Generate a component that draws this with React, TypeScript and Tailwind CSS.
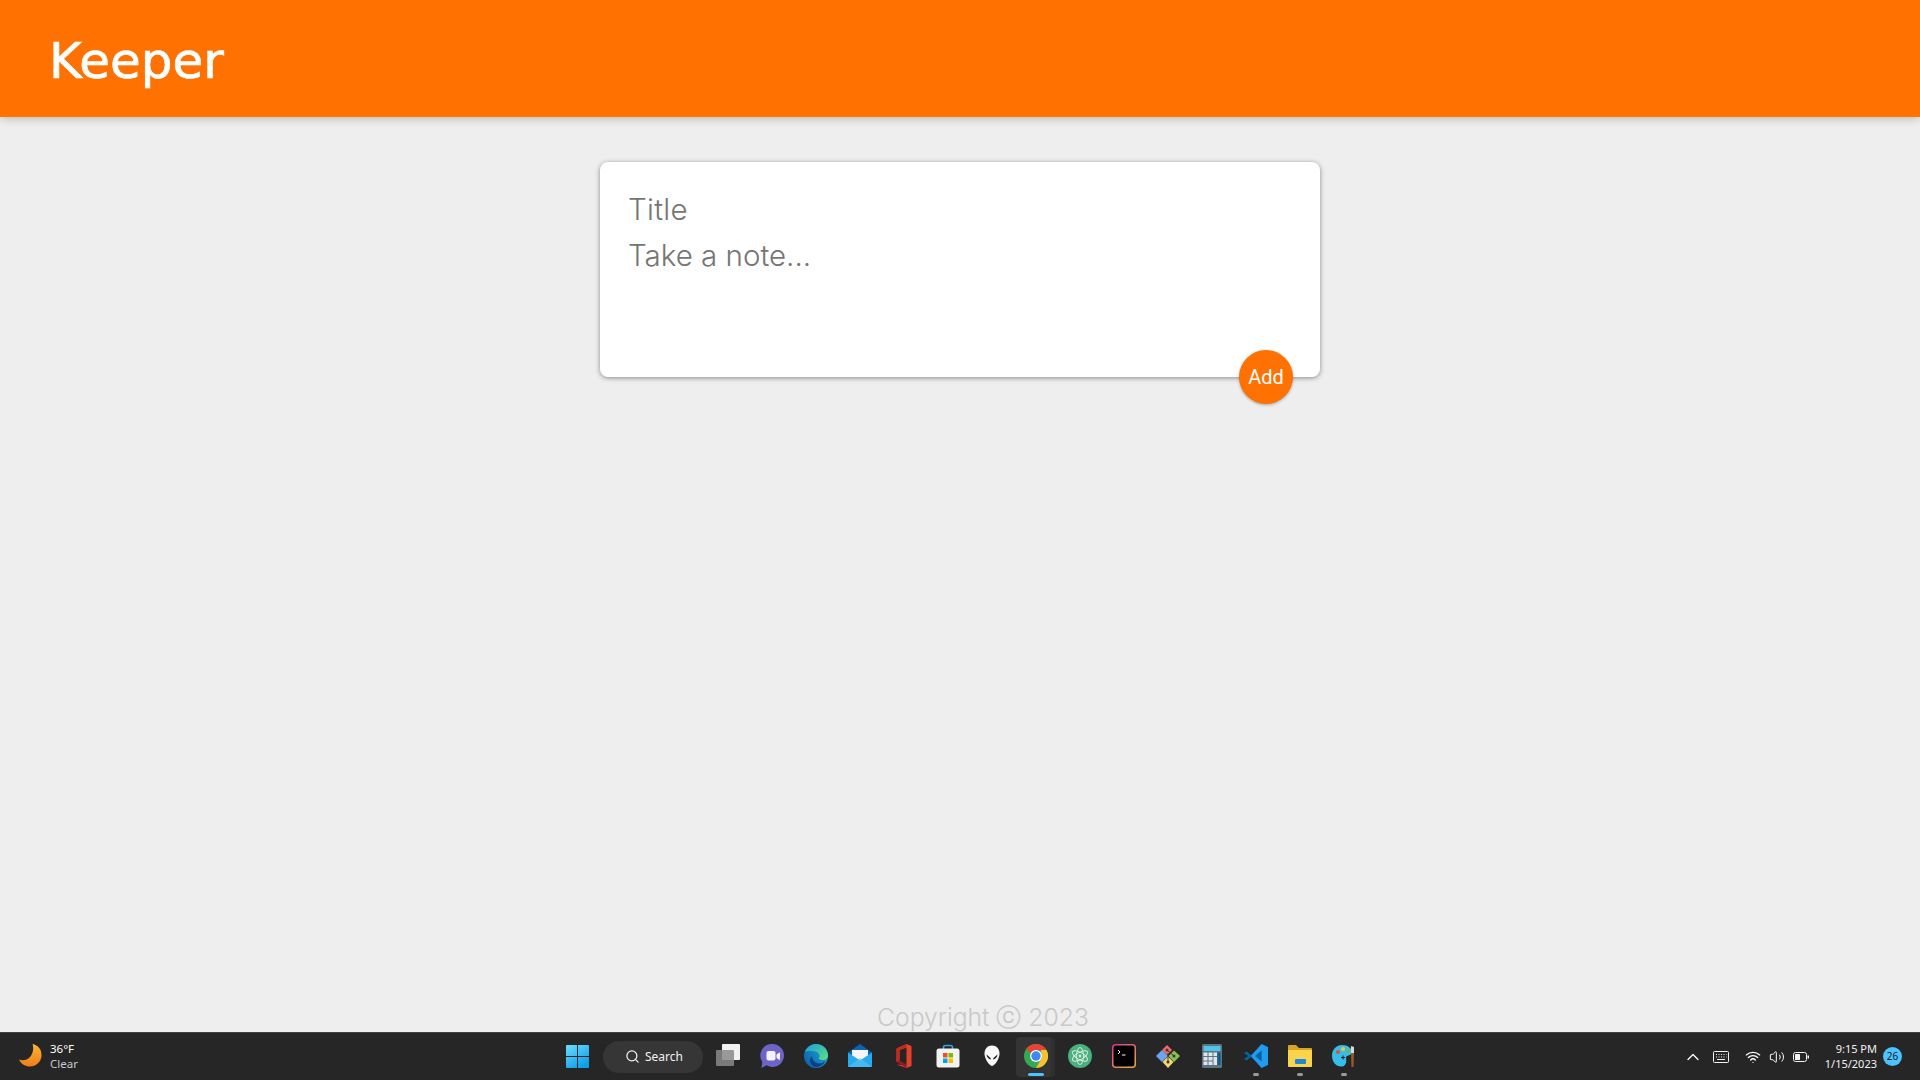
import { ReactNode } from "react";
import { ChevronUp, Search, Volume2, Wifi } from "lucide-react";

function Tile({ children, active, dot }: { children: ReactNode; active?: boolean; dot?: boolean }) {
  return (
    <div className="relative flex h-[40px] w-[44px] items-center justify-center">
      {active && (
        <span className="absolute inset-y-0 left-[2px] w-[35px] rounded-[4px] bg-[#343434] shadow-[4px_0_0_#2f2f2f]" />
      )}
      <span className="relative mb-[1px] flex">{children}</span>
      {active && <span className="absolute bottom-[1px] left-[14px] h-[3px] w-[16px] rounded-full bg-[#4cc2ff]" />}
      {dot && <span className="absolute bottom-[1px] left-[19px] h-[3px] w-[6px] rounded-full bg-[#9a9a9a]" />}
    </div>
  );
}

function WindowsIcon() {
  return (
    <svg width="23" height="23" viewBox="0 0 24 24">
      <defs>
        <linearGradient id="win" x1="0" y1="0" x2="0.6" y2="1">
          <stop offset="0" stopColor="#6fdcff" />
          <stop offset="1" stopColor="#0f9fe8" />
        </linearGradient>
      </defs>
      <path fill="url(#win)" d="M0 1a1 1 0 0 1 1-1h10.500v11.500H0zM12.500 0H23a1 1 0 0 1 1 1v10.500H12.500zM0 12.500h11.500V24H1a1 1 0 0 1-1-1zM12.500 12.500H24V23a1 1 0 0 1-1 1H12.500z" />
    </svg>
  );
}

function TaskViewIcon() {
  return (
    <svg width="24" height="24" viewBox="0 0 24 24">
      <rect x="6" y="0" width="18" height="16" rx="1" fill="#f2f2f2" />
      <rect x="0" y="6" width="18" height="16" rx="1" fill="#8a8a8a" fillOpacity="0.85" />
    </svg>
  );
}

function ChatIcon() {
  return (
    <svg width="24" height="24" viewBox="0 0 24 24">
      <path fill="#6e63c9" d="M12.500 0a11.500 11.500 0 1 1-6 21.300L1.500 24l.8-6.200A11.500 11.500 0 0 1 12.500 0z" />
      <rect x="6.500" y="7" width="9" height="9.500" rx="2" fill="#f4f2ff" />
      <path fill="#f4f2ff" d="M16.500 10.500l3.500-2.300v8.100l-3.500-2.300z" />
    </svg>
  );
}

function EdgeIcon() {
  return (
    <svg width="24" height="24" viewBox="0 0 24 24">
      <defs>
        <linearGradient id="edgeA" x1="0" y1="1" x2="1" y2="0.2">
          <stop offset="0" stopColor="#0c59a4" />
          <stop offset="1" stopColor="#1ea8d8" />
        </linearGradient>
        <linearGradient id="edgeB" x1="0" y1="0" x2="1" y2="1">
          <stop offset="0" stopColor="#1b9de2" />
          <stop offset="1" stopColor="#5fe07c" />
        </linearGradient>
      </defs>
      <circle cx="12" cy="12" r="12" fill="url(#edgeA)" />
      <path fill="url(#edgeB)" d="M1 8C3 2.500 8 0 12 0c7 0 12 5.500 12 11.500 0 3-2.500 4.500-5 4.500-2 0-4-.6-4.500-1.500 2-1.500 1.500-6-3-7C7 6.500 3 6 1 8z" />
      <path fill="#0b3f82" d="M8 12.500c0 4 3.500 7 7 7 2.500 0 4-.8 6-2.500-1.500 3.500-5 6-9 6-3 0-6-3-6-7 0-1.500 1-3 2-3.500z" />
    </svg>
  );
}

function MailIcon() {
  return (
    <svg width="24" height="24" viewBox="0 0 24 24">
      <path fill="#0a63b5" d="M0 8.500L12 0l12 8.500V12H0z" />
      <path fill="#f6f6f6" d="M4 6h16v7l-8 4-8-4z" />
      <path fill="#29a9ee" d="M0 8.500l12 8 12-8V22a1 1 0 0 1-1 1H1a1 1 0 0 1-1-1z" />
      <path fill="#55c6f5" d="M0 23l12-9 12 9z" opacity="0.6" />
    </svg>
  );
}

function OfficeIcon() {
  return (
    <svg width="24" height="24" viewBox="0 0 24 24">
      <path fill="#e8412b" d="M14.500 0l5 2v20l-5 2-10-3.500 10 1V3.500L7.500 6v10.500L4.500 18V4.500z" />
      <path fill="#8f1d24" d="M4.500 18l3-1.500L14.500 20.500v3.500z" />
      <path fill="#c4291e" d="M4.500 4.500L14.500 0v3.500L7.500 6v10.500L4.500 18z" />
    </svg>
  );
}

function StoreIcon() {
  return (
    <svg width="24" height="24" viewBox="0 0 24 24">
      <path fill="none" stroke="#2ea9e0" strokeWidth="1.600" d="M7.500 6V3.500a2 2 0 0 1 2-2h5a2 2 0 0 1 2 2V6" />
      <rect x="0.500" y="4.500" width="23" height="19" rx="2.500" fill="#f2f2f2" />
      <rect x="7" y="9" width="4.500" height="4.500" fill="#f25022" />
      <rect x="12.500" y="9" width="4.500" height="4.500" fill="#7fba00" />
      <rect x="7" y="14.500" width="4.500" height="4.500" fill="#00a4ef" />
      <rect x="12.500" y="14.500" width="4.500" height="4.500" fill="#ffb900" />
    </svg>
  );
}

function AlienIcon() {
  return (
    <svg width="24" height="24" viewBox="0 0 24 24">
      <path fill="#fafafa" d="M12 1.500c4.500 0 7.500 3.500 7.500 8 0 5-4.500 12-7.500 12.500-3-.5-7.500-7.500-7.500-12.500 0-4.500 3-8 7.500-8z" />
      <path fill="#202020" d="M6.500 10.500l4 3.500.5 1.500c-2.500-.3-4.500-2.500-4.500-5zM17.500 10.500l-4 3.500-.5 1.500c2.500-.3 4.500-2.500 4.500-5z" />
    </svg>
  );
}

function ChromeIcon() {
  return (
    <svg width="24" height="24" viewBox="0 0 24 24">
      <circle cx="12" cy="12" r="12" fill="#34a853" />
      <path fill="#ea4335" d="M12 0a12 12 0 0 1 10.400 6H12a6 6 0 0 0-5.600 3.800L2.500 4.600A12 12 0 0 1 12 0z" />
      <path fill="#fbc02d" d="M22.400 6A12 12 0 0 1 12 24l5.200-9A6 6 0 0 0 17.200 9l-.2-3z" />
      <circle cx="12" cy="12" r="6" fill="#fff" />
      <circle cx="12" cy="12" r="4.700" fill="#4285f4" />
    </svg>
  );
}

function AtomIcon() {
  return (
    <svg width="24" height="24" viewBox="0 0 24 24">
      <circle cx="12" cy="12" r="12" fill="#4caf7f" />
      <g fill="none" stroke="#d8f2e2" strokeWidth="0.900">
        <ellipse cx="12" cy="12" rx="3.500" ry="8.500" />
        <ellipse cx="12" cy="12" rx="3.500" ry="8.500" transform="rotate(60 12 12)" />
        <ellipse cx="12" cy="12" rx="3.500" ry="8.500" transform="rotate(-60 12 12)" />
      </g>
      <circle cx="12" cy="12" r="1.400" fill="#d8f2e2" />
    </svg>
  );
}

function TerminalIcon() {
  return (
    <svg width="24" height="24" viewBox="0 0 24 24">
      <defs>
        <linearGradient id="term" x1="0" y1="0" x2="0.7" y2="1">
          <stop offset="0" stopColor="#e0368f" />
          <stop offset="1" stopColor="#e8a33d" />
        </linearGradient>
      </defs>
      <rect x="0.750" y="0.750" width="22.500" height="22.500" rx="3" fill="#000" stroke="url(#term)" strokeWidth="1.500" />
      <path fill="none" stroke="#fff" strokeWidth="1" d="M6 6l2 2-2 2M10 11h3.500" />
    </svg>
  );
}

function GitIcon() {
  return (
    <svg width="24" height="24" viewBox="0 0 24 24">
      <path fill="#6aa5ef" d="M0 12l6-6 6 6-6 6z" />
      <path fill="#f06a6a" d="M6 6l5-5 5 5-5 5z" />
      <path fill="#8cc152" d="M12.500 12l5.500-5.500 6 5.500-6 6z" />
      <path fill="#f5d76e" d="M6.500 18l5.500-5.500 5.500 5.500-5.500 6z" />
      <circle cx="11" cy="6" r="1.500" fill="#3a3a3a" />
      <circle cx="18" cy="12" r="1.500" fill="#3a3a3a" />
      <circle cx="12" cy="18" r="1.500" fill="#3a3a3a" />
      <path stroke="#3a3a3a" strokeWidth="1" d="M11 6l7 6M12 9v9" />
    </svg>
  );
}

function CalcIcon() {
  return (
    <svg width="24" height="24" viewBox="0 0 24 24">
      <rect x="2" width="20" height="24" rx="1.500" fill="#5d7382" />
      <rect x="3.500" y="2" width="17" height="5" fill="#4ec6ea" />
      {[8.500, 13, 17.500].flatMap((y) =>
        [3.500, 8.500].map((x) => <rect key={`${x}-${y}`} x={x} y={y} width="4" height="3.500" fill="#dfe6ea" />),
      )}
      <rect x="13.500" y="8.500" width="3.500" height="3.500" fill="#dfe6ea" />
      <rect x="13.500" y="13" width="3.500" height="8" fill="#dfe6ea" />
      <rect x="17.500" y="8.500" width="3" height="12.500" fill="#155a8a" />
    </svg>
  );
}

function VsCodeIcon() {
  return (
    <svg width="24" height="24" viewBox="0 0 24 24">
      <path fill="#0065a9" d="M17.500 1L7 11 2.500 7.500 0 9l4.500 3L0 15l2.500 1.500L7 13l10.500 10z" />
      <path fill="#1f9cf0" d="M17.500 0L24 3v18l-6.500 3-10.500-12zM17.500 6.500L11 12l6.500 5.500z" fillRule="evenodd" />
    </svg>
  );
}

function FolderIcon() {
  return (
    <svg width="24" height="24" viewBox="0 0 24 24">
      <path fill="#d9a520" d="M0 2a1 1 0 0 1 1-1h7l3 3h12a1 1 0 0 1 1 1v3H0z" />
      <path fill="#fcd34d" d="M0 6h24v16a1 1 0 0 1-1 1H1a1 1 0 0 1-1-1z" />
      <rect x="7" y="15" width="11" height="5" rx="1" fill="#1e88d8" />
    </svg>
  );
}

function PaintIcon() {
  return (
    <svg width="24" height="24" viewBox="0 0 24 24">
      <path fill="#36bde8" d="M10 1c6 0 10 3.500 10 7 0 3-3 3-5 4-2 1 0 4-1 7s-3 3.500-5 3.500C4 22.500 0 18 0 11.500 0 5.500 4.500 1 10 1z" />
      <circle cx="6" cy="8" r="2" fill="#e84b3a" />
      <circle cx="11" cy="5" r="2" fill="#f5c23d" />
      <circle cx="16" cy="7" r="1.800" fill="#7cb342" />
      <path fill="none" stroke="#1c1c1c" strokeWidth="1" d="M9 13.500h4M11 11.500v4" />
      <path fill="#9a5a2c" d="M19 9h3l-.5 14h-2z" />
      <path fill="#d9d9d9" d="M19 2l3 1v6h-3z" />
    </svg>
  );
}

function MoonIcon() {
  return (
    <svg width="23" height="23" viewBox="0 0 23 23">
      <defs>
        <linearGradient id="moon" x1="0.5" y1="0" x2="0.5" y2="1">
          <stop offset="0" stopColor="#f7b733" />
          <stop offset="1" stopColor="#f17c1b" />
        </linearGradient>
      </defs>
      <path fill="url(#moon)" d="M13.500 0C19 1 23 5.500 22.500 12c-.5 6-5.500 10.500-11.500 10.500C6.500 22.500 2 20 0 15.500c3.500 1.500 8 .8 11-2.500 3-3.300 4-8.500 2.500-13z" />
    </svg>
  );
}

export default function App() {
  return (
    <div className="flex h-screen flex-col overflow-hidden bg-[#eeeeee] font-['Inter',sans-serif]">
      <header className="h-[117px] shrink-0 bg-[#ff7100] pl-[49px] pt-[31px] shadow-[0_0_10px_rgba(0,0,0,0.3)]">
        <h1 className="font-['DejaVu_Sans',sans-serif] text-[50px] leading-[60px] font-normal text-white [-webkit-text-stroke:0.7px_white]">
          Keeper
        </h1>
      </header>

      <main className="flex flex-1 justify-center pt-[45px]">
        <form className="relative h-[215px] w-[720px] rounded-[8px] bg-white px-[28px] pt-[23px] shadow-[0_1px_5px_#8a8989]">
          <input
            placeholder="Title"
            className="block h-[47px] w-full font-['Inter',sans-serif] text-[29.500px] tracking-[0.3px] font-light outline-none placeholder:text-[#757575]"
          />
          <textarea
            placeholder="Take a note..."
            className="block h-[94px] w-full resize-none font-['Inter',sans-serif] text-[29.500px] leading-[47px] font-light outline-none placeholder:text-[#757575]"
          />
          <button
            type="button"
            className="absolute right-[27px] top-[188px] h-[54px] w-[54px] rounded-full bg-[#ff7100] font-['Roboto',sans-serif] text-[20px] text-white shadow-[0_1px_3px_rgba(0,0,0,0.3)]"
          >
            Add
          </button>
        </form>
      </main>

      <footer className="h-[32px] shrink-0 overflow-hidden pl-[46px] text-center text-[24.700px] leading-[35px] font-light text-[#c8c8c8]">
        Copyright ⓒ 2023
      </footer>

      <div className="grid h-[48px] shrink-0 grid-cols-[1fr_auto_1fr] items-center border-t border-[#3f3f3f] bg-[#262626] font-['Noto_Sans',sans-serif] text-white">
        <div className="flex items-center pl-[19px]">
          <span className="mb-[2px] flex"><MoonIcon /></span>
          <div className="mb-[2px] ml-[8px] text-[11.500px] leading-[15px]">
            <div>36°F</div>
            <div className="text-[#c9c9c9]">Clear</div>
          </div>
        </div>

        <div className="flex items-center pl-[1px]">
          <Tile><WindowsIcon /></Tile>
          <div className="ml-[4px] mr-[3px] flex h-[32px] w-[100px] items-center justify-center gap-[5px] rounded-full bg-[#363636] pl-[2px] text-[12px] text-[#f2f2f2]">
            <Search size={15} strokeWidth={2} />
            Search
          </div>
          <Tile><TaskViewIcon /></Tile>
          <Tile><ChatIcon /></Tile>
          <Tile><EdgeIcon /></Tile>
          <Tile><MailIcon /></Tile>
          <Tile><OfficeIcon /></Tile>
          <Tile><StoreIcon /></Tile>
          <Tile><AlienIcon /></Tile>
          <Tile active><ChromeIcon /></Tile>
          <Tile><AtomIcon /></Tile>
          <Tile><TerminalIcon /></Tile>
          <Tile><GitIcon /></Tile>
          <Tile><CalcIcon /></Tile>
          <Tile dot><VsCodeIcon /></Tile>
          <Tile dot><FolderIcon /></Tile>
          <Tile dot><PaintIcon /></Tile>
        </div>

        <div className="flex items-center justify-end pr-[18px]">
          <ChevronUp size={20} strokeWidth={1.500} className="mr-[10px]" />
          <svg width="16" height="12" viewBox="0 0 16 12" fill="none" stroke="#f2f2f2" className="mr-[16px]">
            <rect x="0.500" y="0.500" width="15" height="11" rx="1" />
            <path d="M3 3.500h1M5.500 3.500h1M8 3.500h1M10.500 3.500h1M13 3.500h.5M3 6h1M5.500 6h1M8 6h1M10.500 6h1M13 6h.5M4 8.500h8" />
          </svg>
          <Wifi size={16} strokeWidth={2} className="mr-[8px]" />
          <Volume2 size={16} strokeWidth={1.500} className="mr-[8px]" />
          <svg width="16" height="10" viewBox="0 0 16 10" fill="none" className="mr-[16px]">
            <rect x="0.500" y="0.500" width="13" height="9" rx="2" stroke="#f2f2f2" />
            <rect x="2" y="2" width="5" height="6" rx="0.500" fill="#f2f2f2" />
            <rect x="14.500" y="3.500" width="1.500" height="3" fill="#f2f2f2" />
          </svg>
          <div className="mb-[1px] text-right text-[11px] leading-[15px] text-[#f2f2f2]">
            <div>9:15 PM</div>
            <div>1/15/2023</div>
          </div>
          <span className="ml-[6px] flex h-[19px] w-[19px] items-center justify-center rounded-full bg-[#4cc2ff] text-[10px] text-[#10202a]">
            26
          </span>
        </div>
      </div>
    </div>
  );
}
